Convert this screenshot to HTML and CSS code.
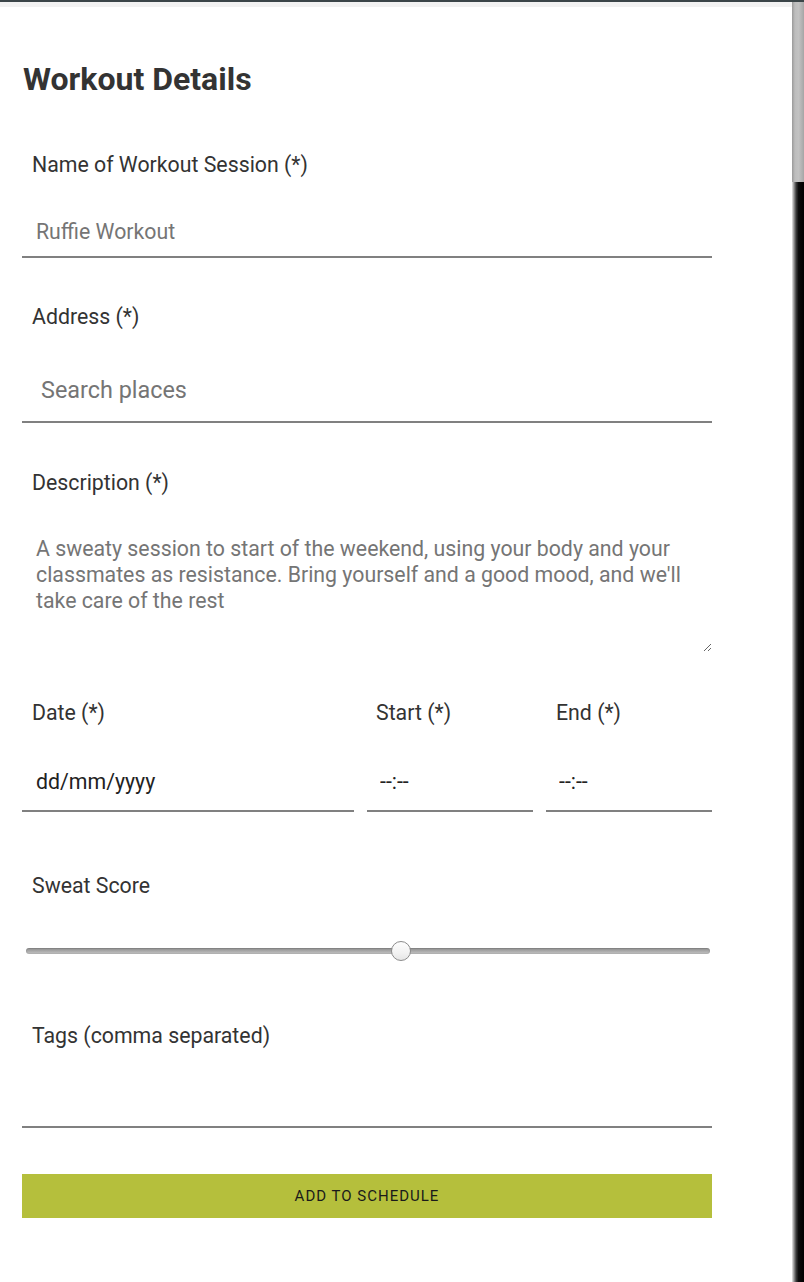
FILE: index.html
```html
<!DOCTYPE html>
<html lang="en">
<head>
<meta charset="utf-8">
<title>Workout Details</title>
<link rel="stylesheet" href="styles.css">
</head>
<body>
<div class="page">
  <div class="topband"></div>
  <form class="form">
    <h1 class="title">Workout Details</h1>

    <div class="field">
      <label class="label">Name of Workout Session (*)</label>
      <input class="input input-name" type="text" placeholder="Ruffie Workout">
    </div>

    <div class="field field-gap-s">
      <label class="label">Address (*)</label>
      <input class="input input-search" type="text" placeholder="Search places">
    </div>

    <div class="field field-gap-d">
      <label class="label">Description (*)</label>
      <textarea class="textarea" placeholder="A sweaty session to start of the weekend, using your body and your classmates as resistance. Bring yourself and a good mood, and we'll take care of the rest"></textarea>
    </div>

    <div class="row">
      <div class="col">
        <label class="label">Date (*)</label>
        <input class="input input-date" type="text" value="dd/mm/yyyy">
      </div>
      <div class="col">
        <label class="label label-time">Start (*)</label>
        <input class="input input-time" type="text" value="--:--">
      </div>
      <div class="col">
        <label class="label">End (*)</label>
        <input class="input input-time" type="text" value="--:--">
      </div>
    </div>

    <div class="field field-gap-l">
      <label class="label">Sweat Score</label>
      <div class="slider-wrap">
        <input class="slider" type="range" min="0" max="100" value="55">
      </div>
    </div>

    <div class="field field-gap-t">
      <label class="label">Tags (comma separated)</label>
      <input class="input input-tags" type="text">
    </div>

    <button class="button" type="button">ADD TO SCHEDULE</button>
  </form>
</div>
<div class="scrollbar">
  <div class="thumb"></div>
  <div class="track"></div>
</div>
</body>
</html>
```
FILE: styles.css
```css
html, body {
  margin: 0;
  padding: 0;
}
body {
  height: 1282px;
  overflow: hidden;
  box-sizing: border-box;
  border-top: 2px solid #3b4548;
  display: flex;
  font-family: Roboto, "Liberation Sans", Arial, sans-serif;
  background: #ffffff;
  color: #333333;
}
.page {
  flex: 1;
  display: flex;
  flex-direction: column;
}
.topband {
  height: 5px;
  background: #f2f2f2;
}
.form {
  width: 690px;
  padding-left: 22px;
  display: flex;
  flex-direction: column;
}
.title {
  margin: 53px 0 0 1px;
  font-size: 32px;
  line-height: 38px;
  font-weight: 700;
  color: #333333;
}
.field {
  display: flex;
  flex-direction: column;
  margin-top: 55px;
}
.field-gap-s { margin-top: 47px; }
.field-gap-d { margin-top: 48px; }
.field-gap-l { margin-top: 62px; }
.field-gap-t { margin-top: 63px; }
.label {
  display: block;
  padding-left: 10px;
  font-size: 21.3px;
  line-height: 24px;
  color: #333333;
}
.label-time { padding-left: 9px; }
.input {
  display: block;
  box-sizing: border-box;
  width: 100%;
  margin: 29px 0 0;
  border: 0;
  border-bottom: 2px solid #808080;
  border-radius: 0;
  outline: none;
  background: transparent;
  font-family: Roboto, "Liberation Sans", Arial, sans-serif;
  font-size: 21.3px;
  color: #222222;
  padding: 0 0 0 14px;
}
.input::placeholder { color: #757575; opacity: 1; }
.input-name {
  height: 52px;
}
.input-search {
  height: 65px;
  font-size: 23.4px;
  padding-left: 19px;
}
.textarea {
  display: block;
  box-sizing: border-box;
  width: 100%;
  height: 126px;
  margin: 31px 0 0;
  padding: 10px 14px;
  border: 0;
  outline: none;
  font-family: Roboto, "Liberation Sans", Arial, sans-serif;
  font-size: 21.3px;
  line-height: 26px;
  color: #222222;
  background: transparent;
}
.textarea::placeholder { color: #757575; opacity: 1; }
.row {
  display: grid;
  grid-template-columns: 2fr 1fr 1fr;
  column-gap: 13px;
  margin-top: 49px;
}
.col {
  display: flex;
  flex-direction: column;
  min-width: 0;
}
.row .input { margin-top: 28px; height: 59px; }
.input-time { padding-left: 13px; }
.slider-wrap {
  margin-top: 43px;
  height: 20px;
  padding: 0 2px 0 4px;
}
.slider {
  -webkit-appearance: none;
  appearance: none;
  display: block;
  width: 100%;
  height: 20px;
  margin: 0;
  background: transparent;
}
.slider::-webkit-slider-runnable-track {
  height: 6px;
  border-radius: 3px;
  background: linear-gradient(to bottom, #8a8a8a 0%, #a9a9a9 50%, #c4c4c4 100%);
  box-shadow: inset 0 0 0 1px rgba(0,0,0,0.08);
}
.slider::-webkit-slider-thumb {
  -webkit-appearance: none;
  appearance: none;
  width: 20px;
  height: 20px;
  margin-top: -7px;
  border-radius: 50%;
  box-sizing: border-box;
  border: 1px solid #8c8c8c;
  background: linear-gradient(to bottom, #fdfdfd 0%, #f2f2f2 60%, #e6e6e6 100%);
}
.input-tags {
  height: 52px;
  margin-top: 28px;
}
.button {
  display: block;
  width: 100%;
  height: 44px;
  margin-top: 46px;
  border: 0;
  border-radius: 0;
  background: #b5bf3c;
  color: #1a1a1a;
  font-family: Roboto, "Liberation Sans", Arial, sans-serif;
  font-size: 15px;
  letter-spacing: 1px;
  padding: 0;
}
.scrollbar {
  width: 12px;
  display: flex;
  flex-direction: column;
}
.thumb {
  height: 180px;
  background: linear-gradient(to right, #9a9a9a 0%, #bdbdbd 25%, #c2c2c2 55%, #b0b0b0 85%, #a5a5a5 100%);
}
.track {
  flex: 1;
  background: linear-gradient(to right, #e8e8e8 0%, #9a9a9a 15%, #3a3a3a 35%, #0a0a0a 55%, #000000 100%);
}
```
